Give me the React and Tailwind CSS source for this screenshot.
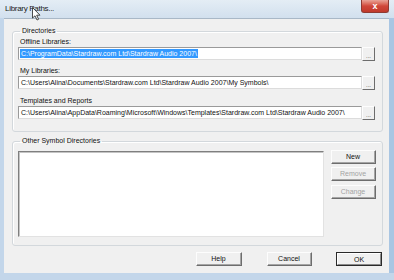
import React from 'react';

const font = "font-['Liberation_Sans',Arial,sans-serif]";

function Btn({ children, disabled, isDefault, w = 'w-[46px]' }) {
  const frame = isDefault
    ? 'border border-[#2a2a2a]'
    : 'border border-t-[#fdfdfd] border-l-[#fdfdfd] border-r-[#6d6d6d] border-b-[#6d6d6d]';
  return (
    <div className={`${w} h-[14px] ${frame} bg-[#f0f0f0] flex items-center justify-center`}>
      <div
        className={`w-full h-full flex items-center justify-center text-[7px] leading-none ${
          isDefault ? 'border border-t-white border-l-white border-r-[#8a8a8a] border-b-[#8a8a8a]' : 'border-r border-b border-r-[#a5a5a5] border-b-[#a5a5a5]'
        } ${disabled ? 'text-[#a3a3a3]' : 'text-[#111]'}`}
      >
        {children}
      </div>
    </div>
  );
}

function PathRow({ value, selected }) {
  return (
    <div className="flex items-start h-[14px]">
      <div className="flex-1 min-w-0 h-[13px] bg-white border border-t-[#9a9a9a] border-l-[#9a9a9a] border-r-[#dcdcdc] border-b-[#dcdcdc] flex items-center pl-[1px] overflow-hidden whitespace-nowrap">
        {selected ? (
          <span className="bg-[#3399ff] text-white text-[7px] leading-[9px] px-[1px]">{value}</span>
        ) : (
          <span className="text-[#111] text-[7px] leading-[9px] px-[1px]">{value}</span>
        )}
      </div>
      <div className="w-[13px] shrink-0 h-[14px] bg-[#f0f0f0] border border-t-[#fdfdfd] border-l-[#fdfdfd] border-r-[#6d6d6d] border-b-[#6d6d6d] flex items-center justify-center">
        <span className="text-[6px] leading-none text-[#333] mt-[3px]">...</span>
      </div>
    </div>
  );
}

const label = 'text-[7px] leading-[10px] text-[#111] ml-[2px]';

export default function App() {
  return (
    <div className={`w-[394px] h-[280px] bg-[#c3d6ea] flex flex-col overflow-hidden ${font} relative`}>
      {/* title bar */}
      <div className="h-[18px] flex items-start justify-between bg-gradient-to-b from-[#e4edf5] to-[#d2e0ee]">
        <span className="ml-[5px] mt-[4px] text-[8px] tracking-[-0.3px] leading-[10px] text-[#1a1a1a]">Library Paths...</span>
        <div className="mr-[5px] w-[28px] h-[13px] rounded-b-[3px] bg-gradient-to-b from-[#e8a397] via-[#d0473a] to-[#c0392b] border border-[#8e3a32] border-t-0 flex items-center justify-center">
          <span className="text-white text-[9px] leading-none font-bold">x</span>
        </div>
      </div>

      {/* cursor */}
      <svg className="absolute left-[32px] top-[7px]" width="9" height="14" viewBox="0 0 9 14">
        <path d="M0.5 0.5 L0.5 11 L3 8.8 L5 13 L6.6 12.3 L4.7 8.2 L8 8.2 Z" fill="white" stroke="#222" strokeWidth="0.8" />
      </svg>

      <div className="flex flex-1">
        <div className="w-[4px]" />
        <div className="w-[385px] h-[255px] bg-[#f0f0f0] border-t border-[#a9b8c7] flex flex-col">
          {/* Directories */}
          <fieldset className="min-w-0 w-[371px] mt-[7px] ml-[8px] border border-[#d3d8dc] rounded-[3px] pl-[5px] pr-[7px] pb-[11px] shadow-[inset_1px_1px_0_#fff]">
            <legend className="ml-[2px] px-[2px] text-[7px] leading-[10px] text-[#111]">Directories</legend>
            <div className={`${label} mt-[1px]`}>Offline Libraries:</div>
            <PathRow value={'C:\\ProgramData\\Stardraw.com Ltd\\Stardraw Audio 2007\\'} selected />
            <div className={`${label} mt-[5px]`}>My Libraries:</div>
            <PathRow value={'C:\\Users\\Alina\\Documents\\Stardraw.com Ltd\\Stardraw Audio 2007\\My Symbols\\'} />
            <div className={`${label} mt-[6px]`}>Templates and Reports</div>
            <PathRow value={'C:\\Users\\Alina\\AppData\\Roaming\\Microsoft\\Windows\\Templates\\Stardraw.com Ltd\\Stardraw Audio 2007\\'} />
          </fieldset>

          {/* Other Symbol Directories */}
          <fieldset className="min-w-0 w-[371px] mt-[4px] ml-[8px] border border-[#d3d8dc] rounded-[3px] pl-[5px] pr-[6px] pb-[8px] shadow-[inset_1px_1px_0_#fff]">
            <legend className="ml-[2px] px-[2px] text-[7px] leading-[10px] text-[#111]">Other Symbol Directories</legend>
            <div className="flex gap-[7px] mt-[5px]">
              <div className="w-[306px] h-[86px] bg-white border border-t-[#7f7f7f] border-l-[#7f7f7f] border-r-[#e2e2e2] border-b-[#e2e2e2] shadow-[inset_1px_1px_0_#c4c4c4]" />
              <div className="flex flex-col gap-[3px] -mt-[1px]">
                <Btn w="w-[45px]">New</Btn>
                <Btn w="w-[45px]" disabled>Remove</Btn>
                <div className="mt-[1px]">
                  <Btn w="w-[45px]" disabled>Change</Btn>
                </div>
              </div>
            </div>
          </fieldset>

          {/* footer */}
          <div className="mt-[6px] flex justify-end pr-[7px]">
            <Btn>Help</Btn>
            <div className="ml-[25px]"><Btn w="w-[45px]">Cancel</Btn></div>
            <div className="ml-[24px]"><Btn isDefault>OK</Btn></div>
          </div>
        </div>
        <div className="w-[5px] bg-[#a9c6e3]" />
      </div>
      <div className="h-[7px]" />
    </div>
  );
}
